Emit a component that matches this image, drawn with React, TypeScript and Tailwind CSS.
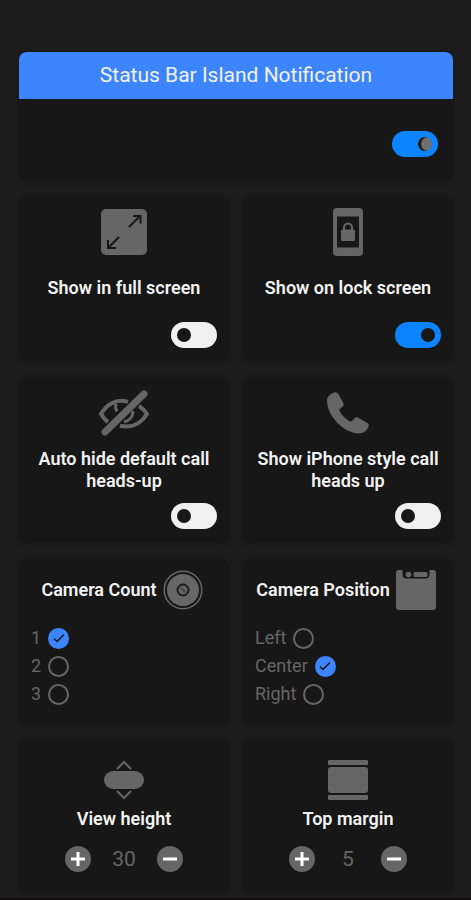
import React, { useState } from 'react';
import { Plus, Minus } from 'lucide-react';

interface ToggleProps {
  label: string;
  defaultOn?: boolean;
}

const Toggle: React.FC<ToggleProps> = ({ label, defaultOn = false }) => (
  <input
    type="checkbox"
    role="switch"
    aria-label={label}
    defaultChecked={defaultOn}
    className="block h-[26px] w-[46px] shrink-0 cursor-pointer appearance-none rounded-full bg-[#f0f0f0] p-[6px] before:block before:size-[14px] before:rounded-full before:bg-[#171717] checked:bg-[#0d84ff] checked:pl-[26px]"
  />
);

const MainToggle: React.FC<ToggleProps> = ({ label, defaultOn = false }) => (
  <input
    type="checkbox"
    role="switch"
    aria-label={label}
    defaultChecked={defaultOn}
    className="block h-[26px] w-[46px] shrink-0 cursor-pointer appearance-none rounded-full bg-[#f0f0f0] p-[6px] before:block before:size-[14px] before:rounded-full before:bg-[#6f6f6f] before:shadow-[inset_3px_0_0_#171717] checked:bg-[#0d84ff] checked:pl-[26px]"
  />
);

const FullScreenIcon = () => (
  <svg viewBox="0 0 48 48" className="size-12" aria-hidden="true">
    <rect x="1" y="1" width="46" height="46" rx="5" fill="#666" />
    <g fill="none" stroke="#171717" strokeWidth="2">
      <path d="M29 19 40 8M33 8h7.500v7.500" />
      <path d="M19 29 8 40M8 32v8h8" />
    </g>
  </svg>
);

const LockScreenIcon = () => (
  <svg viewBox="0 0 32 50" className="h-[50px] w-8" aria-hidden="true">
    <path
      fill="#666"
      fillRule="evenodd"
      d="M5 1h22a4 4 0 0 1 4 4v40a4 4 0 0 1-4 4H5a4 4 0 0 1-4-4V5a4 4 0 0 1 4-4ZM5 9.500v31h22v-31Z"
    />
    <rect x="9" y="22.500" width="14" height="11.500" rx="1.500" fill="#666" />
    <path d="M12 23v-2.500a4 4 0 0 1 8 0V23" fill="none" stroke="#666" strokeWidth="2" />
  </svg>
);

const HiddenEyeIcon = () => (
  <svg viewBox="0 0 54 48" className="h-12 w-[54px]" fill="none" stroke="#666" aria-hidden="true">
    <path strokeWidth="4" d="M31 12.800C18 9 8.500 17 4 25c2 3.400 4.200 6 7 8" />
    <path strokeWidth="4" d="M42 17c3.500 2.200 6 4.800 8 8C44 34.500 34.500 39.500 23 36.800" />
    <path strokeWidth="3" d="M19 14.500c-1 3-.5 5.500 1 8" />
    <path strokeWidth="3" d="M36 22c0 6-4 10-9 11" />
    <path strokeWidth="7" strokeLinecap="round" d="M47 5 8 43" />
  </svg>
);

const PhoneIcon = () => (
  <svg viewBox="0 0 46 46" className="size-[46px]" fill="#666" aria-hidden="true">
    <path d="M2 10c0-3 4-7 8-7.700 1.500-.2 2.600.6 3.300 1.800l5 9c.8 1.500.3 2.800-.8 3.700l-2.300 1.800c-.9.800-1 1.700-.4 2.800 2.400 4.200 5.500 7.400 9.700 9.800 1.100.6 2 .5 2.800-.4l2-2.400c.9-1.100 2.200-1.500 3.500-.8l9.200 5.100c1.600.9 2.200 2.400 1.500 4.100-1.800 4-5 6.700-9.500 6.700C20 43.500 2 27 2 10Z" />
  </svg>
);

const CameraIcon = () => (
  <svg viewBox="0 0 40 40" className="size-10 shrink-0" fill="none" aria-hidden="true">
    <circle cx="20" cy="20" r="18.800" stroke="#666" strokeWidth="1.500" />
    <circle cx="20" cy="20" r="16" fill="#666" />
    <circle cx="20" cy="20" r="5.500" stroke="#1c1c1c" strokeWidth="2" />
    <path d="m18 18 4 4" stroke="#444" strokeWidth="2" />
  </svg>
);

const NotchIcon = () => (
  <svg viewBox="0 0 40 40" className="size-10 shrink-0" aria-hidden="true">
    <path
      fill="#666"
      d="M0 3a3 3 0 0 1 3-3h3.500v4.500a4 4 0 0 0 4 4h19a4 4 0 0 0 4-4V0H37a3 3 0 0 1 3 3v34a3 3 0 0 1-3 3H3a3 3 0 0 1-3-3Z"
    />
    <rect x="17.500" y="2" width="14" height="5" rx="1.500" fill="#666" />
    <circle cx="12.500" cy="4.500" r="2.800" fill="#666" />
  </svg>
);

const HeightIcon = () => (
  <svg viewBox="0 0 40 40" className="size-10" fill="none" stroke="#666" strokeWidth="2" aria-hidden="true">
    <rect x="0" y="11" width="40" height="18" rx="9" fill="#666" stroke="none" />
    <path d="m13 9 7-7 7 7M13 31l7 7 7-7" />
  </svg>
);

const MarginIcon = () => (
  <svg viewBox="0 0 40 40" className="size-10" fill="#666" aria-hidden="true">
    <rect x="0" y="0" width="40" height="5" rx="1" />
    <rect x="0" y="7" width="40" height="26" rx="3" />
    <rect x="0" y="35" width="40" height="5" rx="1" />
  </svg>
);

const cardClass = 'rounded-lg bg-[#171717] shadow-[0_0_4px_#171717]';
const titleClass = 'text-lg/[22px] font-semibold';

interface SwitchCardProps {
  icon: React.ReactNode;
  title: string;
  twoLines?: boolean;
  defaultOn?: boolean;
}

const SwitchCard: React.FC<SwitchCardProps> = ({ icon, title, twoLines = false, defaultOn }) => (
  <section className={`${cardClass} flex min-h-[165px] flex-col px-3 pt-[10px] pb-[14px]`}>
    <div className="flex h-[50px] items-center justify-center">{icon}</div>
    <h2 className={`${titleClass} text-center ${twoLines ? 'mt-[10px]' : 'mt-5'}`}>{title}</h2>
    <div className="mt-auto flex justify-end">
      <Toggle label={title} defaultOn={defaultOn} />
    </div>
  </section>
);

interface RadioCardProps {
  icon: React.ReactNode;
  title: string;
  name: string;
  options: string[];
  initial: string;
}

const RadioCard: React.FC<RadioCardProps> = ({ icon, title, name, options, initial }) => {
  const [selected, setSelected] = useState(initial);

  return (
    <fieldset className={`${cardClass} min-h-[165px] min-w-0 pt-[11px] pr-4 pl-3`}>
      <div className="flex items-center justify-center gap-[6px]">
        <h2 className={`${titleClass} whitespace-nowrap`}>{title}</h2>
        {icon}
      </div>
      <div className="mt-[14px] flex flex-col items-start">
        {options.map(option => (
          <label key={option} className="flex h-7 cursor-pointer items-center gap-[7px] text-lg text-[#666]">
            {option}
            <span className="grid place-items-center">
              <input
                type="radio"
                name={name}
                value={option}
                checked={selected === option}
                onChange={() => setSelected(option)}
                className="col-start-1 row-start-1 size-[21px] appearance-none rounded-full border-2 border-[#666] checked:border-[#3d85fd] checked:bg-[#3d85fd]"
              />
              {selected === option && (
                <svg viewBox="0 0 12 12" className="pointer-events-none col-start-1 row-start-1 size-3" aria-hidden="true">
                  <path d="m1 6.500 3 3 7-7" fill="none" stroke="#171717" strokeWidth="1.500" />
                </svg>
              )}
            </span>
          </label>
        ))}
      </div>
    </fieldset>
  );
};

interface StepperCardProps {
  icon: React.ReactNode;
  title: string;
  initial: number;
}

const StepperCard: React.FC<StepperCardProps> = ({ icon, title, initial }) => {
  const [value, setValue] = useState(initial);
  const buttonClass = 'grid size-[26px] cursor-pointer place-items-center rounded-full bg-[#666] text-white';

  return (
    <section className={`${cardClass} flex min-h-[152px] flex-col items-center pt-5`}>
      {icon}
      <h2 className={`${titleClass} mt-2`}>{title}</h2>
      <div className="mt-4 flex items-center">
        <button type="button" aria-label={`Increase ${title}`} className={buttonClass} onClick={() => setValue(v => v + 1)}>
          <Plus className="size-6" strokeWidth={3} strokeLinecap="butt" />
        </button>
        <output className="w-[66px] text-center text-[21px]/[26px] text-[#666]">{value}</output>
        <button type="button" aria-label={`Decrease ${title}`} className={buttonClass} onClick={() => setValue(v => v - 1)}>
          <Minus className="size-6" strokeWidth={3} strokeLinecap="butt" />
        </button>
      </div>
    </section>
  );
};

const App: React.FC = () => (
  <div className="flex min-h-screen flex-col border-b-2 border-[#150c10] bg-[#1c1c1c] font-['Roboto','Liberation_Sans',sans-serif] text-[#f2f2f2]">
    <main className="grow pt-[52px] pr-[18px] pb-1 pl-[19px]">
      <section className={`${cardClass} overflow-hidden`}>
        <h1 className="bg-[#3d85fd] text-center text-[21px]/[47px]">Status Bar Island Notification</h1>
        <div className="flex h-[82px] items-start justify-end px-[15px] pt-8">
          <MainToggle label="Status Bar Island Notification" defaultOn />
        </div>
      </section>

      <div className="mt-4 grid grid-cols-2 gap-x-[14px] gap-y-4">
        <SwitchCard icon={<FullScreenIcon />} title="Show in full screen" />
        <SwitchCard icon={<LockScreenIcon />} title="Show on lock screen" defaultOn />
        <SwitchCard icon={<HiddenEyeIcon />} title="Auto hide default call heads-up" twoLines />
        <SwitchCard icon={<PhoneIcon />} title="Show iPhone style call heads up" twoLines />
        <RadioCard icon={<CameraIcon />} title="Camera Count" name="camera-count" options={['1', '2', '3']} initial="1" />
        <RadioCard
          icon={<NotchIcon />}
          title="Camera Position"
          name="camera-position"
          options={['Left', 'Center', 'Right']}
          initial="Center"
        />
        <StepperCard icon={<HeightIcon />} title="View height" initial={30} />
        <StepperCard icon={<MarginIcon />} title="Top margin" initial={5} />
      </div>
    </main>
  </div>
);

export default App;
